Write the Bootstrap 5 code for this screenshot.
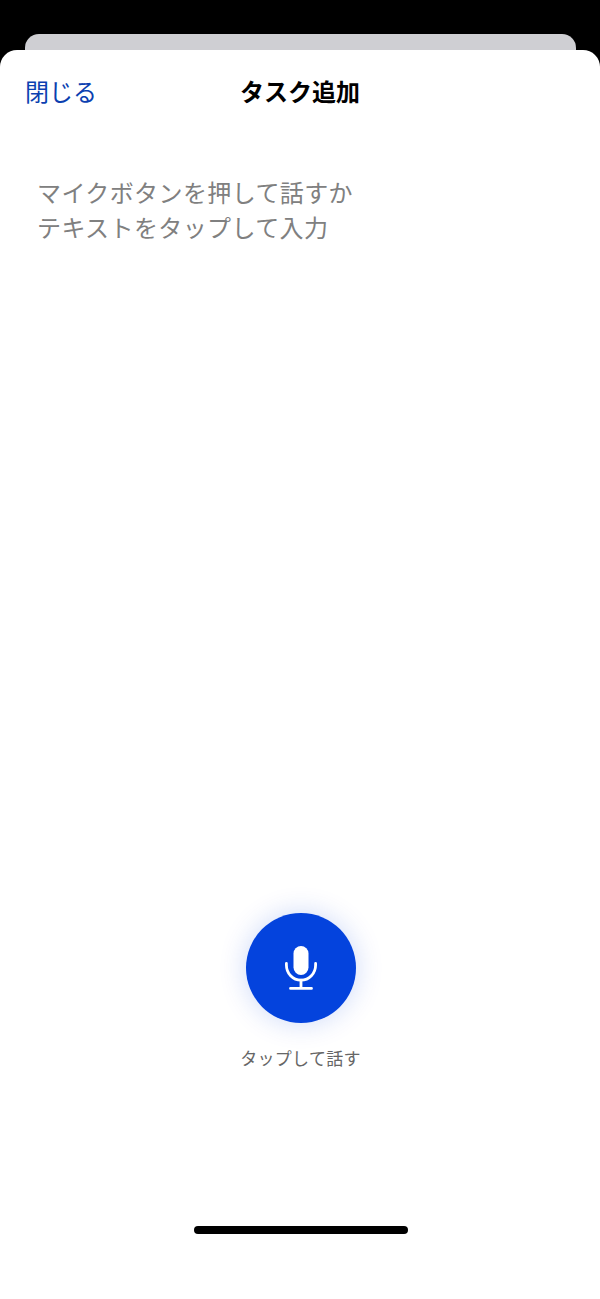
<!DOCTYPE html>
<html lang="ja">
<head>
    <meta charset="UTF-8">
    <meta name="viewport" content="width=device-width, initial-scale=1.0">
    <title>タスク追加</title>
    <link href="https://cdn.jsdelivr.net/npm/bootstrap@5.3.3/dist/css/bootstrap.min.css" rel="stylesheet">
    <style>
        html, body {
            height: 100%;
        }
        body {
            background-color: #000;
            font-family: "Noto Sans CJK JP", "Noto Sans", sans-serif;
            overflow: hidden;
        }
        .peek-card {
            height: 30px;
            margin: 34px 24px -14px 25px;
            background-color: #cfcfd3;
            border-radius: 14px 14px 0 0;
        }
        .sheet {
            position: relative;
            background-color: #fff;
            border-radius: 17px 17px 0 0;
            height: 1249px;
        }
        .sheet-header {
            height: 82px;
            padding: 0 25px;
        }
        .close-link {
            color: #0b3fb0;
            font-size: 24px;
            line-height: 1;
            text-decoration: none;
        }
        .sheet-title {
            color: #000;
            font-size: 24px;
            font-weight: 700;
            line-height: 1;
        }
        .hint-text {
            color: #808080;
            font-size: 24px;
            line-height: 35px;
            padding: 42px 37px 0;
            letter-spacing: 0.4px;
        }
        .mic-btn {
            width: 110px;
            height: 110px;
            background-color: #0443dd;
            border: 0;
            box-shadow: 0 0 28px rgba(4, 67, 221, 0.2);
        }
        .mic-label {
            color: #666;
            font-size: 17px;
            line-height: 24px;
            letter-spacing: 0.3px;
            margin-top: 23px;
        }
        .mic-area {
            padding-bottom: 156px;
            padding-left: 1px;
        }
        .home-bar {
            width: 214px;
            height: 8px;
            background-color: #000;
            margin: 0 0 65px 194px;
        }
    </style>
</head>
<body>
    <div class="peek-card"></div>
    <div class="sheet d-flex flex-column">
        <div class="sheet-header d-flex align-items-center justify-content-between position-relative">
            <a class="close-link" href="#">閉じる</a>
            <div class="sheet-title position-absolute top-50 start-50 translate-middle text-nowrap">タスク追加</div>
        </div>
        <div class="hint-text flex-grow-1">マイクボタンを押して話すか<br>テキストをタップして入力</div>
        <div class="mic-area d-flex flex-column align-items-center">
            <button class="mic-btn btn rounded-circle d-flex align-items-center justify-content-center p-0" type="button" aria-label="タップして話す">
                <svg width="32" height="44" viewBox="0 0 32 44" fill="none">
                    <rect x="8.5" y="0" width="15" height="29" rx="7.5" fill="#fff"/>
                    <path d="M1.4 17.5V19C1.4 27.5 7.8 34.2 16 34.2S30.6 27.5 30.6 19V17.5" stroke="#fff" stroke-width="2.8" stroke-linecap="round"/>
                    <path d="M16 34.2V42.4M5.5 42.4H26.5" stroke="#fff" stroke-width="2.8" stroke-linecap="round"/>
                </svg>
            </button>
            <div class="mic-label">タップして話す</div>
        </div>
        <div class="home-bar rounded-pill"></div>
    </div>
    <script src="https://cdn.jsdelivr.net/npm/bootstrap@5.3.3/dist/js/bootstrap.bundle.min.js"></script>
</body>
</html>
